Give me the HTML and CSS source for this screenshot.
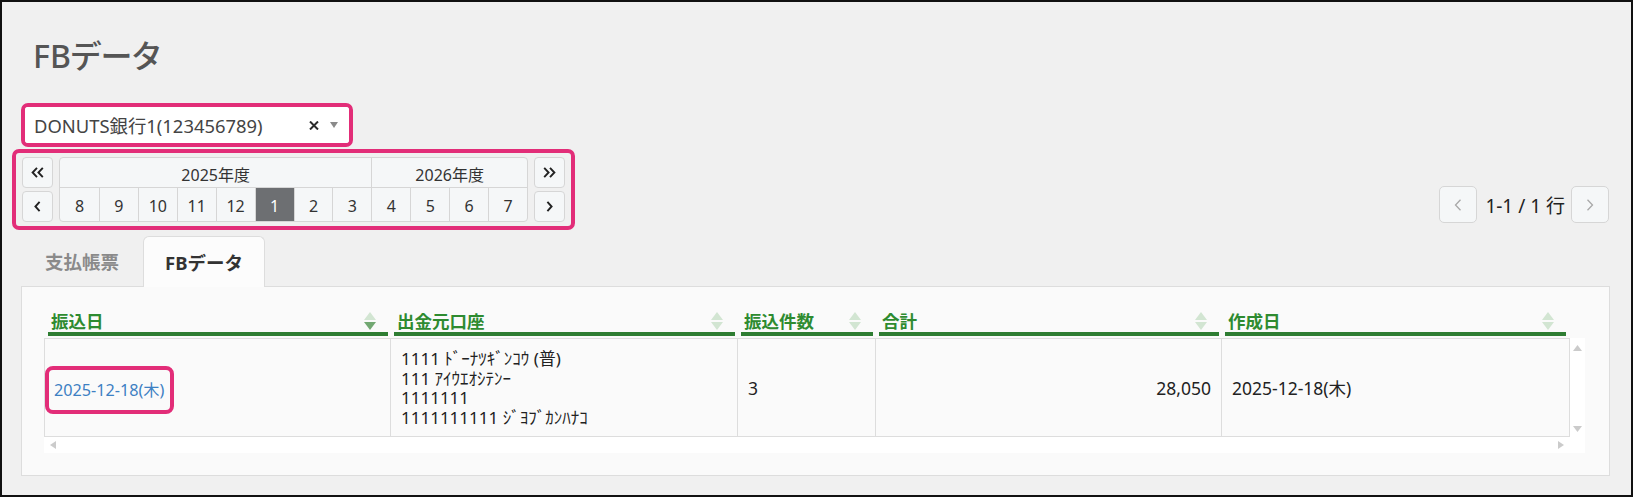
FILE: index.html
```html
<!DOCTYPE html>
<html lang="ja">
<head>
<meta charset="utf-8">
<title>FBデータ</title>
<link rel="stylesheet" href="styles.css">
</head>
<body>
<div class="frame">
  <h1 class="title">FBデータ</h1>

  <div class="mark mark-select">
    <div class="select">
      <span class="select-text">DONUTS銀行1(123456789)</span>
      <svg class="select-clear" width="10" height="9" viewBox="0 0 10 9"><path d="M1 0.5L9 8.5M9 0.5L1 8.5" stroke="#2b2b2b" stroke-width="2"/></svg>
      <svg class="select-arrow" width="8" height="6" viewBox="0 0 8 6"><path d="M0 0H8L4 6Z" fill="#8a8a8a"/></svg>
    </div>
  </div>

  <div class="toolbar">
    <div class="mark mark-period">
      <div class="period">
        <div class="nav-col">
          <button class="nav-btn"><svg width="13" height="11" viewBox="0 0 13 11"><path d="M6 0.8L1.6 5.5L6 10.2M11.8 0.8L7.4 5.5L11.8 10.2" fill="none" stroke="#222" stroke-width="1.9"/></svg></button>
          <button class="nav-btn"><svg width="7" height="11" viewBox="0 0 7 11"><path d="M5.6 0.8L1.4 5.5L5.6 10.2" fill="none" stroke="#222" stroke-width="1.9"/></svg></button>
        </div>
        <div class="months">
          <div class="year year-a">2025年度</div>
          <div class="year year-b">2026年度</div>
          <div class="month month-first">8</div>
          <div class="month">9</div>
          <div class="month">10</div>
          <div class="month">11</div>
          <div class="month">12</div>
          <div class="month month-active">1</div>
          <div class="month">2</div>
          <div class="month">3</div>
          <div class="month">4</div>
          <div class="month">5</div>
          <div class="month">6</div>
          <div class="month">7</div>
        </div>
        <div class="nav-col">
          <button class="nav-btn"><svg width="13" height="11" viewBox="0 0 13 11"><path d="M1.2 0.8L5.6 5.5L1.2 10.2M7 0.8L11.4 5.5L7 10.2" fill="none" stroke="#222" stroke-width="1.9"/></svg></button>
          <button class="nav-btn"><svg width="7" height="11" viewBox="0 0 7 11"><path d="M1.4 0.8L5.6 5.5L1.4 10.2" fill="none" stroke="#222" stroke-width="1.9"/></svg></button>
        </div>
      </div>
    </div>

    <div class="pager">
      <button class="pager-btn"><svg width="8" height="12" viewBox="0 0 8 12"><path d="M6.5 0.7L1.5 6L6.5 11.3" fill="none" stroke="#a8a8a8" stroke-width="1.3"/></svg></button>
      <span class="pager-text">1-1 / 1 行</span>
      <button class="pager-btn"><svg width="8" height="12" viewBox="0 0 8 12"><path d="M1.5 0.7L6.5 6L1.5 11.3" fill="none" stroke="#a8a8a8" stroke-width="1.3"/></svg></button>
    </div>
  </div>

  <div class="tabs">
    <div class="tab">支払帳票</div>
    <div class="tab tab-active">FBデータ</div>
  </div>

  <div class="panel">
    <div class="thead">
      <div class="th"><span>振込日</span><svg class="sort" width="12" height="18" viewBox="0 0 12 18"><path d="M6 0L12 8H0Z" fill="#d2e5d2"/><path d="M0 10H12L6 18Z" fill="#72a872"/></svg></div>
      <div class="th"><span>出金元口座</span><svg class="sort" width="12" height="18" viewBox="0 0 12 18"><path d="M6 0L12 8H0Z" fill="#d2e5d2"/><path d="M0 10H12L6 18Z" fill="#d2e5d2"/></svg></div>
      <div class="th"><span>振込件数</span><svg class="sort" width="12" height="18" viewBox="0 0 12 18"><path d="M6 0L12 8H0Z" fill="#d2e5d2"/><path d="M0 10H12L6 18Z" fill="#d2e5d2"/></svg></div>
      <div class="th"><span>合計</span><svg class="sort" width="12" height="18" viewBox="0 0 12 18"><path d="M6 0L12 8H0Z" fill="#d2e5d2"/><path d="M0 10H12L6 18Z" fill="#d2e5d2"/></svg></div>
      <div class="th"><span>作成日</span><svg class="sort" width="12" height="18" viewBox="0 0 12 18"><path d="M6 0L12 8H0Z" fill="#d2e5d2"/><path d="M0 10H12L6 18Z" fill="#d2e5d2"/></svg></div>
    </div>

    <div class="scroll">
      <div class="scroll-main">
        <div class="tbody">
          <div class="td td-link"><a class="date-link" href="#">2025-12-18(木)</a></div>
          <div class="td td-multi">
            <div class="line">1111 ﾄﾞｰﾅﾂｷﾞﾝｺｳ (普)</div>
            <div class="line">111 ｱｲｳｴｵｼﾃﾝｰ</div>
            <div class="line">1111111</div>
            <div class="line">1111111111 ｼﾞﾖﾌﾞｶﾝﾊﾅｺ</div>
          </div>
          <div class="td">3</div>
          <div class="td td-num">28,050</div>
          <div class="td td-last">2025-12-18(木)</div>
        </div>
        <div class="vscroll">
          <svg width="9" height="6" viewBox="0 0 9 6"><path d="M4.5 0L9 6H0Z" fill="#cbcbcb"/></svg>
          <svg width="9" height="6" viewBox="0 0 9 6"><path d="M0 0H9L4.5 6Z" fill="#cbcbcb"/></svg>
        </div>
      </div>
      <div class="hscroll">
        <svg width="6" height="8" viewBox="0 0 6 8"><path d="M6 0V8L0 4Z" fill="#cbcbcb"/></svg>
        <svg width="6" height="8" viewBox="0 0 6 8"><path d="M0 0V8L6 4Z" fill="#cbcbcb"/></svg>
      </div>
    </div>
  </div>
</div>
</body>
</html>
```

FILE: styles.css
```css
* { box-sizing: border-box; }

html, body {
  margin: 0;
  padding: 0;
  background: #f0f0f0;
}

body {
  font-family: "Noto Sans", "Noto Sans CJK JP", sans-serif;
  color: #333;
}

.frame {
  width: 1633px;
  height: 497px;
  border: 2px solid #111;
  background: #f0f0f0;
  padding: 0 21px 0 19px;
  overflow: hidden;
}

.title {
  margin: 36px 0 0 12px;
  height: 36px;
  font-size: 32px;
  line-height: 36px;
  font-weight: 500;
  color: #555;
  font-feature-settings: "palt";
}

/* pink annotation boxes */
.mark {
  border: 4px solid #e22d78;
  border-radius: 7px;
}

.mark-select {
  width: 332px;
  margin-top: 29px;
}

.select {
  height: 36px;
  background: #fff;
  display: flex;
  align-items: center;
  padding: 0 11px 0 9px;
  border-radius: 3px;
}

.select-text {
  flex: 1;
  font-size: 18.4px;
  color: #444;
  white-space: nowrap;
}

.select-clear {
  margin-right: 11px;
}

.toolbar {
  display: flex;
  justify-content: space-between;
  align-items: flex-end;
  margin-top: 2px;
}

.mark-period {
  margin-left: -9px;
  padding: 4px 6px;
}

.period {
  display: flex;
  gap: 6px;
}

.nav-col {
  display: flex;
  flex-direction: column;
  gap: 3px;
}

.nav-btn {
  width: 31px;
  height: 31px;
  padding: 0;
  border: 1px solid #d6d6d6;
  border-radius: 4px;
  background: #f5f7f8;
  display: flex;
  align-items: center;
  justify-content: center;
}

.months {
  width: 469px;
  display: grid;
  grid-template-columns: repeat(12, 1fr);
  grid-template-rows: 30px 33px;
  border: 1px solid #d6d6d6;
  border-radius: 4px;
  background: #f5f7f8;
  overflow: hidden;
  font-size: 16px;
  color: #333;
}

.year {
  display: flex;
  align-items: center;
  justify-content: center;
  border-bottom: 1px solid #d6d6d6;
  padding-top: 2px;
}

.year-a { grid-column: span 8; }

.year-b {
  grid-column: span 4;
  border-left: 1px solid #d6d6d6;
}

.month {
  display: flex;
  align-items: center;
  justify-content: center;
  border-left: 1px solid #d6d6d6;
  padding-top: 2px;
}

.month-first { border-left: none; }

.month-active {
  background: #6d6f72;
  color: #fff;
}

.pager {
  display: flex;
  align-items: center;
  margin-bottom: 7px;
  margin-right: 1px;
}

.pager-btn {
  width: 38px;
  height: 37px;
  padding: 0;
  border: 1px solid #d6d6d6;
  border-radius: 5px;
  background: #f5f7f8;
  display: flex;
  align-items: center;
  justify-content: center;
}

.pager-text {
  margin: 0 6px 0 8px;
  font-size: 19px;
  color: #222;
  white-space: nowrap;
}

.tabs {
  display: flex;
  margin-top: 6px;
  height: 50px;
}

.tab {
  display: flex;
  align-items: center;
  padding: 0 24px;
  font-size: 18.5px;
  font-weight: 700;
  color: #8a8a8a;
}

.tab-active {
  width: 122px;
  height: 51px;
  padding: 0;
  justify-content: center;
  background: #fcfcfc;
  border: 1px solid #ddd;
  border-bottom: none;
  border-radius: 6px 6px 0 0;
  color: #333;
  font-size: 18.5px;
  position: relative;
  z-index: 1;
}

.panel {
  height: 190px;
  border: 1px solid #ddd;
  background: #fafafa;
  padding: 23px 24px 22px 22px;
}

.thead {
  display: grid;
  grid-template-columns: 346px 347px 138px 346px 347px;
  padding: 0 1px;
  width: 1526px;
}

.th {
  margin: 0 3px;
  height: 26px;
  border-bottom: 4px solid #2e7d32;
  display: flex;
  align-items: center;
  justify-content: space-between;
  padding: 0 12px 0 3px;
  font-size: 17.5px;
  line-height: 22px;
  font-weight: 700;
  color: #2e8b30;
  white-space: nowrap;
}

.scroll {
  margin-top: 2px;
  width: 1541px;
  background: #fff;
}

.scroll-main {
  display: flex;
}

.tbody {
  width: 1526px;
  display: grid;
  grid-template-columns: 346px 347px 138px 346px 347px;
  border: 1px solid #ddd;
  background: #fafafa;
}

.td {
  height: 97px;
  display: flex;
  align-items: center;
  padding: 0 10px;
  border-right: 1px solid #ddd;
  font-size: 17.5px;
  line-height: 20px;
  color: #222;
  white-space: nowrap;
}

.td-multi {
  display: block;
  padding-top: 10px;
  font-size: 17px;
}

.line {
  height: 19.5px;
  line-height: 19.5px;
}

.td-num { justify-content: flex-end; }

.td-last { border-right: none; }

.td-link { padding-left: 0; }

.date-link {
  display: inline-block;
  margin-top: 5px;
  border: 4px solid #e22d78;
  border-radius: 8px;
  padding: 10px 6px 10px 5px;
  font-size: 16.2px;
  line-height: 20px;
  color: #3d80c3;
  text-decoration: none;
}

.vscroll {
  width: 15px;
  display: flex;
  flex-direction: column;
  justify-content: space-between;
  align-items: center;
  padding: 7px 0 5px;
}

.hscroll {
  height: 16px;
  display: flex;
  justify-content: space-between;
  align-items: center;
  padding: 0 21px 0 6px;
}
```
